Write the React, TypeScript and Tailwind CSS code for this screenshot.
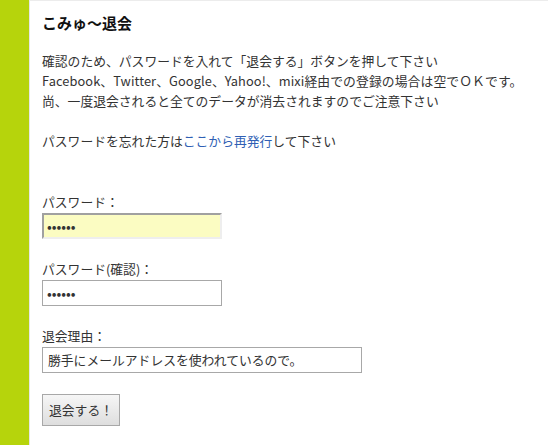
export default function App() {
  const font = { fontFamily: '"Noto Sans CJK JP", "Noto Sans", sans-serif' };
  return (
    <div className="flex h-[445px] w-[548px] bg-white text-[#333]" style={font}>
      <div className="w-[29px] shrink-0 bg-[#b6d40c]" />
      <div className="flex-1 border-l border-t border-l-[#e6e6e6] border-t-[#ececec] pl-[12px] pt-[12px]">
        <h1 className="text-[15px] font-bold leading-[20px] text-[#111]">こみゅ〜退会</h1>
        <div className="mt-[18px] text-[12.8px] leading-[20px]">
          <p>確認のため、パスワードを入れて「退会する」ボタンを押して下さい</p>
          <p className="tracking-[0.1px]">Facebook、Twitter、Google、Yahoo!、mixi経由での登録の場合は空でＯＫです。</p>
          <p>尚、一度退会されると全てのデータが消去されますのでご注意下さい</p>
          <p className="mt-[20px]">
            パスワードを忘れた方は<a className="text-[#2f5fb4]">ここから再発行</a>して下さい
          </p>
        </div>
        <div className="mt-[41px] text-[12.8px] leading-[20px]">
          <label className="block">パスワード：</label>
          <div className="mt-[1px] flex h-[26px] w-[180px] items-center border-2 border-b-[#eee] border-l-[#a0a0a0] border-r-[#eee] border-t-[#a0a0a0] bg-[#fbfcc2] pl-[3px] text-[14px] leading-none">
            ••••••
          </div>
          <label className="mt-[20px] block">パスワード(確認)：</label>
          <div className="mt-[1px] flex h-[26px] w-[180px] items-center border border-[#a8a8a8] pl-[4px] text-[14px] leading-none">
            ••••••
          </div>
          <label className="mt-[20px] block">退会理由：</label>
          <div className="mt-[1px] flex h-[26px] w-[320px] items-center border border-[#a8a8a8] pl-[5px]">
            勝手にメールアドレスを使われているので。
          </div>
          <button className="mt-[21px] flex h-[32px] w-[78px] items-center justify-center border border-[#a8a8a8] bg-gradient-to-b from-[#f6f6f6] to-[#dedede] text-[12.8px]">
            退会する！
          </button>
        </div>
      </div>
    </div>
  );
}
